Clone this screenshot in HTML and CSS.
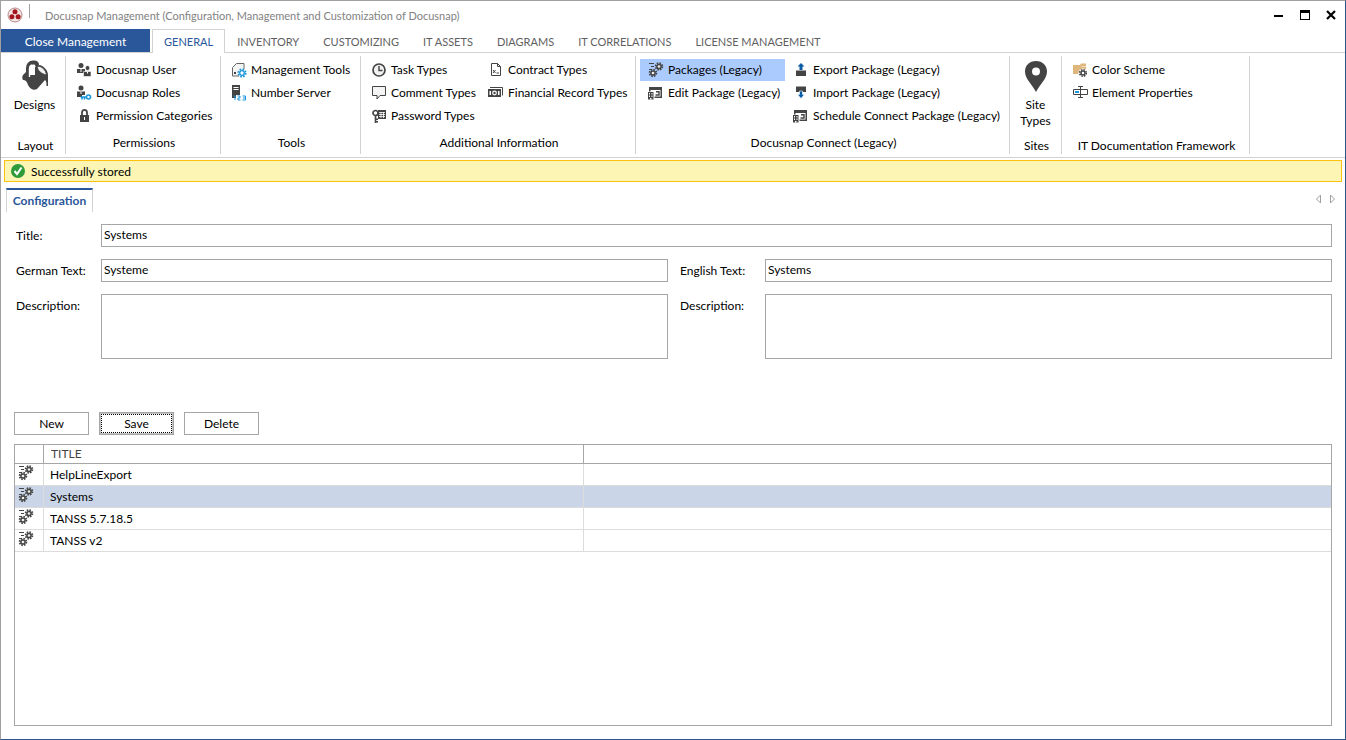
FILE: index.html
```html
<!DOCTYPE html>
<html lang="en">
<head>
    <meta charset="UTF-8">
    <meta name="viewport" content="width=device-width, initial-scale=1.0">
    <title>Docusnap Management</title>
    <link rel="stylesheet" href="styles.css">
</head>
<body>
    <!-- Shared icons -->
    <svg class="sprite" aria-hidden="true">
        <symbol id="gears" viewBox="0 0 16 16">
            <path d="M1 1.500h5M3 4.500h3M1 7.500h3" stroke="#444" stroke-width="1" fill="none"/>
            <circle cx="11" cy="4.500" r="3.400" fill="none" stroke="#444" stroke-width="1.800" stroke-dasharray="1.500 1.170"/>
            <circle cx="11" cy="4.500" r="2.100" fill="#eee" stroke="#444" stroke-width="1.500"/>
            <circle cx="5" cy="11" r="3.400" fill="none" stroke="#444" stroke-width="1.800" stroke-dasharray="1.500 1.170"/>
            <circle cx="5" cy="11" r="2.100" fill="#eee" stroke="#444" stroke-width="1.500"/>
        </symbol>
        <symbol id="package" viewBox="0 0 16 16">
            <path d="M1 2h13v11H6.500v-1.500h6V5H2.500v1.500H1z" fill="#444"/>
            <path d="M8 6.700h3v3.300H7.500" fill="none" stroke="#444" stroke-width="1.400"/>
            <path d="M0 7h5.500v7.500H0z" fill="#444"/>
            <path d="M1 8h1v1.500H1zm2.500 0h1v1.500h-1zM1 10.500h1V12H1zm2.500 0h1V12h-1zM2 13h1.500v1.500H2z" fill="#fff"/>
        </symbol>
    </svg>

    <div class="window">
        <header class="titlebar">
            <svg class="logo" viewBox="0 0 16 16" aria-hidden="true">
                <circle cx="8" cy="8" r="7" fill="#f3e4e4" stroke="#b98a8a"/>
                <circle cx="8" cy="4.800" r="2.500" fill="#a3141c"/>
                <circle cx="4.900" cy="9.800" r="2.500" fill="#a3141c"/>
                <circle cx="11.100" cy="9.800" r="2.500" fill="#a3141c"/>
            </svg>
            <span class="titlebar-sep"></span>
            <span class="titlebar-text">Docusnap Management (Configuration, Management and Customization of Docusnap)</span>
            <div class="window-buttons">
                <button type="button" aria-label="Minimize"><svg viewBox="0 0 12 12"><path d="M1 6h9v2H1z"/></svg></button>
                <button type="button" aria-label="Maximize"><svg viewBox="0 0 12 12"><path d="M1 1h10v10H1zM2 4v6h8V4z" fill-rule="evenodd"/></svg></button>
                <button type="button" aria-label="Close"><svg viewBox="0 0 12 12"><path d="M2 2l8 8M10 2l-8 8" stroke="#000" stroke-width="2.200"/></svg></button>
            </div>
        </header>

        <nav class="tabs">
            <button type="button" class="tab-close">Close Management</button>
            <button type="button" class="tab active">GENERAL</button>
            <button type="button" class="tab">INVENTORY</button>
            <button type="button" class="tab">CUSTOMIZING</button>
            <button type="button" class="tab">IT ASSETS</button>
            <button type="button" class="tab">DIAGRAMS</button>
            <button type="button" class="tab">IT CORRELATIONS</button>
            <button type="button" class="tab">LICENSE MANAGEMENT</button>
        </nav>

        <div class="ribbon">
            <section class="group group-layout">
                <button type="button" class="big-button">
                    <svg viewBox="0 0 32 32" aria-hidden="true">
                        <path d="M8 11L4 15c-1 2-1 3 0 5 2 0 4 1 5 5 2 4 6 6 9 4l8-9c1.500 1 1.500 3 1.500 6h1.500V15c0-4-3-8-8-10l-5 2v8H8z" fill="#444"/>
                        <path d="M18 6c5 0 9 4 9.500 9-5-1-9-4-9.500-9z" fill="#f0f0f0" stroke="#444"/>
                        <path d="M9 17V8c0-3 2-5.500 5-5.500h1c2 0 3 1 3 2.500" fill="none" stroke="#444" stroke-width="4" stroke-linecap="round"/>
                        <path d="M10.500 17V8.500c0-2 1-3 2.500-3.500" fill="none" stroke="#fff" stroke-width="1.400"/>
                    </svg>
                    Designs
                </button>
                <h2>Layout</h2>
            </section>

            <section class="group group-permissions">
                <div class="items">
                    <button type="button" class="item">
                        <svg viewBox="0 0 16 16" aria-hidden="true">
                            <circle cx="5" cy="3.500" r="2.500" fill="#444"/><path d="M1 11V7h8v4z" fill="#444"/>
                            <circle cx="11.500" cy="6" r="2.500" fill="#444" stroke="#fff"/><path d="M7.500 14.500V9.500h7.500v5z" fill="#444" stroke="#fff" stroke-width=".6"/>
                            <path d="M5 7v3M11.500 9.500v2" stroke="#fff"/>
                        </svg>
                        Docusnap User
                    </button>
                    <button type="button" class="item">
                        <svg viewBox="0 0 16 16" aria-hidden="true">
                            <circle cx="5" cy="3" r="2.500" fill="#444"/><path d="M1 12V6.500h8V10H6v2z" fill="#444"/>
                            <path d="M5 6.500v2.500" stroke="#fff"/>
                            <circle cx="12.500" cy="12" r="2" fill="none" stroke="#1a97dc" stroke-width="1.600"/>
                            <path d="M10.500 12H4.500M6 12v2.500M8.500 12v2.500" fill="none" stroke="#1a97dc" stroke-width="1.600"/>
                        </svg>
                        Docusnap Roles
                    </button>
                    <button type="button" class="item">
                        <svg viewBox="0 0 16 16" aria-hidden="true">
                            <path d="M4 7h9v7H4z" fill="#444"/><path d="M6 7V4.500c0-3.500 5-3.500 5 0V7" fill="none" stroke="#444" stroke-width="1.800"/>
                            <path d="M8.500 9v3" stroke="#fff"/>
                        </svg>
                        Permission Categories
                    </button>
                </div>
                <h2>Permissions</h2>
            </section>

            <section class="group group-tools">
                <div class="items">
                    <button type="button" class="item">
                        <svg viewBox="0 0 16 16" aria-hidden="true">
                            <path d="M8 14H1.500V5.500l4-4H13V7" fill="#f4f4f4" stroke="#666"/>
                            <path d="M3 10h2v2H3z" fill="#444"/>
                            <circle cx="11" cy="11" r="3.700" fill="#fff" stroke="#1a97dc" stroke-width="1.800" stroke-dasharray="1.700 1.200"/>
                            <circle cx="11" cy="11" r="2.300" fill="#fff" stroke="#1a97dc" stroke-width="1.300"/>
                        </svg>
                        Management Tools
                    </button>
                    <button type="button" class="item">
                        <svg viewBox="0 0 16 16" aria-hidden="true">
                            <path d="M1 0h8v10H5v3H1z" fill="#444"/><path d="M2.500 2.500h5M2.500 4.500h5" stroke="#fff"/>
                            <path d="M2.500 11h1.500v4M6.500 11h2.500v2H7v2h2.500M11.500 11h3v4h-3M12 13h2.500" fill="none" stroke="#1a97dc"/>
                        </svg>
                        Number Server
                    </button>
                </div>
                <h2>Tools</h2>
            </section>

            <section class="group group-additional">
                <div class="items">
                    <button type="button" class="item">
                        <svg viewBox="0 0 16 16" aria-hidden="true">
                            <circle cx="8" cy="8" r="6" fill="#f2f2f2" stroke="#444" stroke-width="1.700"/><path d="M8 4v4.500h3.500" fill="none" stroke="#444" stroke-width="1.400"/>
                        </svg>
                        Task Types
                    </button>
                    <button type="button" class="item">
                        <svg viewBox="0 0 16 16" aria-hidden="true">
                            <path d="M1.500 1.500h13v9H9L6 14v-3.500H1.500z" fill="#f4f4f4" stroke="#444"/>
                        </svg>
                        Comment Types
                    </button>
                    <button type="button" class="item">
                        <svg viewBox="0 0 16 16" aria-hidden="true">
                            <path d="M7 2h8v9H7z" fill="#444"/><path d="M8 4.500h6M8 6.500h6M8 8.500h6M10 4v6M12.500 4v6" stroke="#fff" stroke-width=".8"/>
                            <circle cx="4.500" cy="5" r="2.500" fill="#fff" stroke="#444" stroke-width="1.700"/>
                            <path d="M4.500 7.500V15M4.500 11.200H7M4.500 13.800H7" stroke="#444" stroke-width="1.600"/>
                        </svg>
                        Password Types
                    </button>
                    <button type="button" class="item">
                        <svg viewBox="0 0 16 16" aria-hidden="true">
                            <path d="M3.500 1.500h6l3 3v9h-9z" fill="#fff" stroke="#444"/><path d="M9.500 1.500v3h3" fill="none" stroke="#444"/>
                            <path d="M5 8l2.500 3M7.500 8L5 11M8.500 11h2.500" stroke="#444"/>
                        </svg>
                        Contract Types
                    </button>
                    <button type="button" class="item">
                        <svg viewBox="0 0 16 16" aria-hidden="true">
                            <path d="M2 2.500h12.500v8" fill="none" stroke="#444"/>
                            <path d="M0 4h13v8H0z" fill="#444"/><path d="M1.500 6H3v4H1.500zm8.500 0h1.500v4H10z" fill="#fff"/>
                            <circle cx="6.500" cy="8" r="2.400" fill="#fff"/><circle cx="6.500" cy="8" r="1.200" fill="#444"/>
                        </svg>
                        Financial Record Types
                    </button>
                </div>
                <h2>Additional Information</h2>
            </section>

            <section class="group group-connect">
                <div class="items">
                    <button type="button" class="item selected"><svg aria-hidden="true"><use href="#gears"/></svg>Packages (Legacy)</button>
                    <button type="button" class="item"><svg aria-hidden="true"><use href="#package"/></svg>Edit Package (Legacy)</button>
                    <button type="button" class="item">
                        <svg viewBox="0 0 16 16" aria-hidden="true">
                            <path d="M3 8.500h10V14H3z" fill="#444"/><path d="M8 1l3.500 3.500h-2V8h-3V4.500h-2z" fill="#0b5da8"/>
                        </svg>
                        Export Package (Legacy)
                    </button>
                    <button type="button" class="item">
                        <svg viewBox="0 0 16 16" aria-hidden="true">
                            <path d="M3 1.500h10V7H3z" fill="#444"/><path d="M6.500 6h3v3.500h2L8 13.500 4.500 9.500h2z" fill="#0b5da8" stroke="#fff" stroke-width=".6"/>
                        </svg>
                        Import Package (Legacy)
                    </button>
                    <button type="button" class="item"><svg aria-hidden="true"><use href="#package"/></svg>Schedule Connect Package (Legacy)</button>
                </div>
                <h2>Docusnap Connect (Legacy)</h2>
            </section>

            <section class="group group-sites">
                <button type="button" class="big-button">
                    <svg viewBox="0 0 32 32" aria-hidden="true">
                        <path d="M16 1C9.500 1 5 5.500 5 11.500 5 19 12 24 16 32c4-8 11-13 11-20.500C27 5.500 22.500 1 16 1zm0 6.500a4 4 0 1 1 0 8 4 4 0 0 1 0-8z" fill="#444" fill-rule="evenodd"/>
                    </svg>
                    Site<br>Types
                </button>
                <h2>Sites</h2>
            </section>

            <section class="group group-framework">
                <div class="items">
                    <button type="button" class="item">
                        <svg viewBox="0 0 16 16" aria-hidden="true">
                            <path d="M1 3h7l1-1.500h5V12H1z" fill="#dfb67c"/>
                            <path d="M9.500 4.500H14" stroke="#f3dfc0"/>
                            <circle cx="11" cy="11" r="4.600" fill="#fff"/>
                            <circle cx="11" cy="11" r="3.300" fill="none" stroke="#444" stroke-width="1.600" stroke-dasharray="1.500 1.100"/>
                            <circle cx="11" cy="11" r="2" fill="none" stroke="#444" stroke-width="1.400"/>
                        </svg>
                        Color Scheme
                    </button>
                    <button type="button" class="item">
                        <svg viewBox="0 0 16 16" aria-hidden="true">
                            <path d="M1.500 4.500h14v5h-14z" fill="#fff" stroke="#444"/><path d="M3 6h4v2H3z" fill="#1a97dc"/>
                            <path d="M8.500 1.500v11M6 1.500h5M6 12.500h5" stroke="#444"/>
                        </svg>
                        Element Properties
                    </button>
                </div>
                <h2>IT Documentation Framework</h2>
            </section>
        </div>

        <div class="message" role="status">
            <svg viewBox="0 0 16 16" aria-hidden="true">
                <circle cx="8" cy="8" r="7" fill="#2e9a3a"/><path d="M4.500 8l2.500 3 4.500-6.500" fill="none" stroke="#fff" stroke-width="2"/>
            </svg>
            <span>Successfully stored</span>
        </div>

        <div class="page-tabs">
            <button type="button" class="page-tab">Configuration</button>
            <div class="pager">
                <button type="button" aria-label="Previous"><svg viewBox="0 0 7 10"><path d="M5.500 1v8l-4-4z"/></svg></button>
                <button type="button" aria-label="Next"><svg viewBox="0 0 7 10"><path d="M1.500 1v8l4-4z"/></svg></button>
            </div>
        </div>

        <main>
            <form class="form">
                <label for="title">Title:</label>
                <input type="text" id="title" class="wide" value="Systems">

                <label for="german">German Text:</label>
                <input type="text" id="german" value="Systeme">
                <label for="english" class="second">English Text:</label>
                <input type="text" id="english" value="Systems">

                <label for="german-desc">Description:</label>
                <textarea id="german-desc"></textarea>
                <label for="english-desc" class="second">Description:</label>
                <textarea id="english-desc"></textarea>
            </form>

            <div class="actions">
                <button type="button">New</button>
                <button type="button" class="focused">Save</button>
                <button type="button">Delete</button>
            </div>

            <div class="list">
                <table>
                    <thead>
                        <tr><th class="col-icon"></th><th class="col-title">TITLE</th><th></th></tr>
                    </thead>
                    <tbody>
                        <tr><td><svg aria-hidden="true"><use href="#gears"/></svg></td><td>HelpLineExport</td><td></td></tr>
                        <tr class="selected"><td><svg aria-hidden="true"><use href="#gears"/></svg></td><td>Systems</td><td></td></tr>
                        <tr><td><svg aria-hidden="true"><use href="#gears"/></svg></td><td>TANSS 5.7.18.5</td><td></td></tr>
                        <tr><td><svg aria-hidden="true"><use href="#gears"/></svg></td><td>TANSS v2</td><td></td></tr>
                    </tbody>
                </table>
            </div>
        </main>
    </div>
</body>
</html>
```

FILE: styles.css
```css
* {
    box-sizing: border-box;
}
body {
    margin: 0;
    font-family: Lato, "Open Sans", sans-serif;
    font-size: 12px;
    line-height: 16px;
    color: #000;
    background: #fff;
}
button, input, textarea {
    font: inherit;
    color: inherit;
    border-radius: 0;
}
button {
    padding: 0;
    border: none;
    background: none;
    white-space: nowrap;
}
.sprite {
    display: none;
}
.window {
    display: flex;
    flex-direction: column;
    min-height: 100vh;
    border: 1px solid #a0a0a0;
    border-right-color: #2b5788;
    border-bottom-color: #2b5788;
}

/* Title bar */
.titlebar {
    display: flex;
    align-items: center;
    height: 28px;
    padding: 0 8px 0 6px;
    font-size: 11px;
    color: #828282;
}
.logo {
    width: 16px;
    height: 16px;
}
.titlebar-sep {
    width: 1px;
    height: 14px;
    margin: 0 15px 8px 6px;
    background: #a0a0a0;
}
.titlebar-text {
    padding-top: 2px;
}
.window-buttons {
    display: flex;
    gap: 14px;
    margin-left: auto;
}
.window-buttons svg {
    display: block;
    width: 12px;
    height: 12px;
}

/* Ribbon tabs */
.tabs {
    display: flex;
    height: 24px;
    border-bottom: 1px solid #d2d2d2;
}
.tab-close {
    width: 149px;
    margin-right: 2px;
    padding-top: 2px;
    color: #fff;
    background: #2a579a;
}
.tab {
    padding: 2px 12px 0;
    font-size: 11px;
    color: #5f5f5f;
}
.tab.active {
    padding: 1px 11px 0;
    margin-bottom: -1px;
    color: #2a579a;
    background: #fff;
    border: 1px solid #d2d2d2;
    border-bottom: none;
}

/* Ribbon */
.ribbon {
    display: flex;
    height: 105px;
    padding: 3px 0;
    border-bottom: 1px solid #d2d2d2;
}
.group {
    display: flex;
    flex: none;
    flex-direction: column;
    justify-content: space-between;
    border-right: 1px solid #d2d2d2;
}
.group h2 {
    margin: 0;
    padding-left: 2px;
    font-size: 12px;
    font-weight: normal;
    text-align: center;
    white-space: nowrap;
}
.items {
    display: grid;
    grid-template-rows: repeat(3, 22px);
    grid-auto-flow: column;
    row-gap: 1px;
    padding: 3px 0 0 2px;
}
.item {
    display: flex;
    align-items: center;
    gap: 4px;
    padding: 0 3px 0 8px;
}
.item svg {
    flex: none;
    width: 16px;
    height: 16px;
}
.item.selected {
    background: #abcbff;
}
.big-button {
    padding-top: 4px;
}
.big-button svg {
    display: block;
    width: 32px;
    height: 32px;
    margin: 0 auto 5px;
}
.group-layout {
    width: 65px;
    padding-left: 3px;
}
.group-permissions {
    width: 155px;
}
.group-tools {
    width: 140px;
}
.group-additional {
    width: 275px;
}
.group-additional .items {
    grid-template-columns: 117px 1fr;
}
.group-connect {
    width: 374px;
}
.group-connect .items {
    grid-template-columns: 145px 1fr;
    padding-left: 4px;
}
.group-connect .item:nth-child(2) {
    grid-row-end: span 2;
    align-self: start;
    height: 22px;
}
.group-sites {
    width: 52px;
}
.group-framework {
    width: 188px;
}
.group-permissions h2,
.group-tools h2,
.group-additional h2,
.group-connect h2 {
    margin-bottom: 3px;
}

/* Message bar */
.message {
    display: flex;
    align-items: center;
    gap: 5px;
    height: 22px;
    margin: 2px 3px 0;
    padding-left: 5px;
    border: 1px solid #fdc010;
    background: #fcf5b4;
}
.message span {
    padding-top: 2px;
}
.message svg {
    width: 16px;
    height: 16px;
}

/* Page tabs */
.page-tabs {
    display: flex;
    align-items: center;
    justify-content: space-between;
    margin: 6px 9px 0 5px;
}
.page-tab {
    height: 24px;
    min-width: 87px;
    padding: 0 4px;
    font-weight: bold;
    color: #2a579a;
    border: 1px solid #d2d2d2;
    border-top: 2px solid #2a579a;
    border-bottom: none;
}
.pager {
    display: flex;
    gap: 7px;
    padding-bottom: 2px;
}
.pager svg {
    display: block;
    width: 7px;
    height: 10px;
    fill: none;
    stroke: #a0a0a0;
}

/* Form */
main {
    display: flex;
    flex: 1;
    flex-direction: column;
    padding: 12px 13px 13px;
}
.form {
    display: grid;
    grid-template-columns: 87px 1fr 97px 1fr;
    row-gap: 12px;
}
.form label {
    padding: 4px 0 0 2px;
}
.form label.second {
    padding-left: 12px;
}
.form input,
.form textarea {
    min-width: 0;
    height: 23px;
    margin: 0;
    padding: 0 2px 2px;
    border: 1px solid #a6a6a6;
    background: #fff;
}
.form textarea {
    height: 65px;
    resize: none;
}
.form .wide {
    grid-column: span 3;
}
.actions {
    display: flex;
    gap: 10px;
    margin: 53px 0 9px;
}
.actions button {
    width: 75px;
    height: 23px;
    border: 1px solid #a6a6a6;
}
.actions .focused {
    outline: 1px dotted #000;
    outline-offset: -3px;
    box-shadow: inset 0 0 0 1px #c4c4c4;
}

/* List */
.list {
    flex: 1;
    border: 1px solid #a6a6a6;
}
table {
    width: 100%;
    table-layout: fixed;
    border-collapse: separate;
    border-spacing: 0;
}
th {
    height: 19px;
    padding: 0 7px;
    font-weight: normal;
    text-align: left;
    color: #444;
    border-right: 1px solid #a6a6a6;
    border-bottom: 1px solid #a6a6a6;
}
td {
    height: 22px;
    padding: 0 6px;
    border-right: 1px solid #dcdcdc;
    border-bottom: 1px solid #dcdcdc;
}
th:last-child,
td:last-child {
    border-right: none;
}
td:first-child {
    padding: 0 3px;
}
td svg {
    display: block;
    width: 16px;
    height: 16px;
    margin-bottom: 4px;
}
tr.selected td {
    background: #cad6e7;
}
.col-icon {
    width: 29px;
}
.col-title {
    width: 540px;
}
```
